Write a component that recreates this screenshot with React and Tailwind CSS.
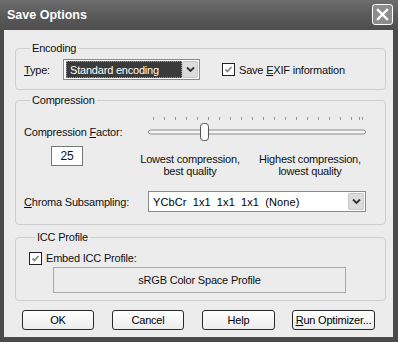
import React from "react";

const font = { fontFamily: '"Liberation Sans", Arial, sans-serif' };

function Chevron() {
  return (
    <svg width="9" height="7" viewBox="0 0 9 7">
      <path d="M1 1.5 L4.5 5 L8 1.5" fill="none" stroke="#333" strokeWidth="1.8" />
    </svg>
  );
}

function Select({ w, text, highlight }) {
  return (
    <div className={`flex h-[21px] items-stretch border border-[#8a8a8a] bg-white p-[1px] ${w}`}>
      <div className="flex flex-1 items-center pl-[1px]">
        {highlight ? (
          <div className="flex h-[17px] flex-1 items-center border border-dotted border-[#999] bg-[#3a3a3a] pl-[3px] text-white">
            {text}
          </div>
        ) : (
          <div className="pl-[2px] text-black tracking-[0.1px]" style={{ wordSpacing: "3px" }}>{text}</div>
        )}
      </div>
      <div className="flex w-[16px] items-center justify-center rounded-[2px] border border-[#c8c8c8] bg-[#dcdcdc]">
        <Chevron />
      </div>
    </div>
  );
}

function Check() {
  return (
    <div className="flex h-[13px] w-[13px] items-center justify-center border border-[#222] bg-white">
      <svg width="9" height="9" viewBox="0 0 9 9">
        <path d="M1.5 4.5 L3.5 6.5 L7.5 2" fill="none" stroke="#8a8a8a" strokeWidth="1.8" />
      </svg>
    </div>
  );
}

function Btn({ w, children }) {
  return (
    <div className={`flex h-[20px] items-center justify-center rounded-[3px] border border-[#2a2a2a] bg-gradient-to-b from-white to-[#ececec] text-black ${w}`}>
      {children}
    </div>
  );
}

function Slider() {
  const ticks = [];
  for (let i = 0; i < 20; i++) ticks.push(5 + i * 11);
  return (
    <svg width="218" height="34" viewBox="0 0 218 34">
      {ticks.map((x) => (
        <line key={x} x1={x + 0.5} y1="4" x2={x + 0.5} y2="7" stroke="#999" strokeWidth="1" />
      ))}
      <line x1="211.5" y1="4" x2="211.5" y2="7" stroke="#999" strokeWidth="1" />
      <rect x="0.5" y="17" width="217" height="4" rx="2" fill="#f4f4f4" stroke="#8a8a8a" />
      <rect x="52.5" y="10.5" width="8" height="17" rx="3" fill="#fafafa" stroke="#555" />
    </svg>
  );
}

export default function App() {
  return (
    <div className="flex h-[342px] w-[398px] flex-col bg-[#4a4a4a] text-[11px] leading-[14px] tracking-[-0.2px] text-[#111]" style={font}>
      <div className="flex h-[30px] items-center justify-between bg-gradient-to-b from-[#6e6e6e] via-[#5a5a5a] to-[#4e4e4e] pl-[7px] pr-[5px] pb-[1px]">
        <div className="text-[12.5px] font-bold tracking-normal text-white">Save Options</div>
        <div className="flex h-[21px] w-[21px] items-center justify-center rounded-[3px] border border-white bg-[#8c8c8c]">
          <svg width="13" height="13" viewBox="0 0 13 13">
            <path d="M2 2 L11 11 M11 2 L2 11" stroke="white" strokeWidth="2.4" strokeLinecap="square" />
          </svg>
        </div>
      </div>
      <div className="mb-[5px] ml-[4px] mr-[5px] flex-1 bg-[#ececec] pl-[11px] pr-[7px]">
        <fieldset className="mt-[11px] rounded-[4px] border border-[#cfcfcf] pb-[9px] pl-[8px]">
          <legend className="ml-[6px] px-[2px] leading-[14px]">Encoding</legend>
          <div className="mt-[4px] flex h-[21px] items-center">
            <div className="w-[39px]"><span className="underline">T</span>ype:</div>
            <Select w="w-[137px]" text="Standard encoding" highlight />
            <div className="ml-[22px] flex items-center">
              <Check />
              <div className="ml-[4px]">Save <span className="underline">E</span>XIF information</div>
            </div>
          </div>
        </fieldset>
        <fieldset className="mt-[3px] rounded-[4px] border border-[#cfcfcf] pb-[12px] pl-[8px]">
          <legend className="ml-[6px] px-[2px] leading-[14px]">Compression</legend>
          <div className="flex pt-[6px]">
            <div className="w-[124px]">
              <div className="mt-[12px]">Compression <span className="underline">F</span>actor:</div>
              <div className="ml-[27px] mt-[7px] flex h-[20px] w-[32px] items-center justify-center border border-[#777] bg-white text-[12px]">25</div>
            </div>
            <div className="w-[218px]">
              <Slider />
              <div className="mt-[6px] flex leading-[12px]">
                <div className="-ml-[14px] w-[120px] text-center">Lowest compression,<br />best quality</div>
                <div className="ml-[8px] w-[120px] text-center">Highest compression,<br />lowest quality</div>
              </div>
            </div>
          </div>
          <div className="mt-[14px] flex items-center">
            <div className="w-[124px]"><span className="underline">C</span>hroma Subsampling:</div>
            <Select w="w-[218px]" text="YCbCr 1x1 1x1 1x1 (None)" />
          </div>
        </fieldset>
        <fieldset className="mt-[5px] rounded-[4px] border border-[#cfcfcf] pb-[7px] pl-[13px]">
          <legend className="ml-[6px] px-[2px] leading-[14px]">ICC Profile</legend>
          <div className="mt-[7px] flex h-[14px] items-center">
            <Check />
            <div className="ml-[4px]">Embed ICC Profile:</div>
          </div>
          <div className="ml-[24px] mt-[2px] flex h-[26px] w-[293px] items-center justify-center border border-[#a8a8a8] bg-[#ececec]">
            sRGB Color Space Profile
          </div>
        </fieldset>
        <div className="ml-[7px] mt-[9px] flex">
          <Btn w="w-[72px]">OK</Btn>
          <div className="ml-[18px]"><Btn w="w-[72px]">Cancel</Btn></div>
          <div className="ml-[18px]"><Btn w="w-[73px]">Help</Btn></div>
          <div className="ml-[17px]"><Btn w="w-[83px]"><span><span className="underline">R</span>un Optimizer...</span></Btn></div>
        </div>
      </div>
    </div>
  );
}
